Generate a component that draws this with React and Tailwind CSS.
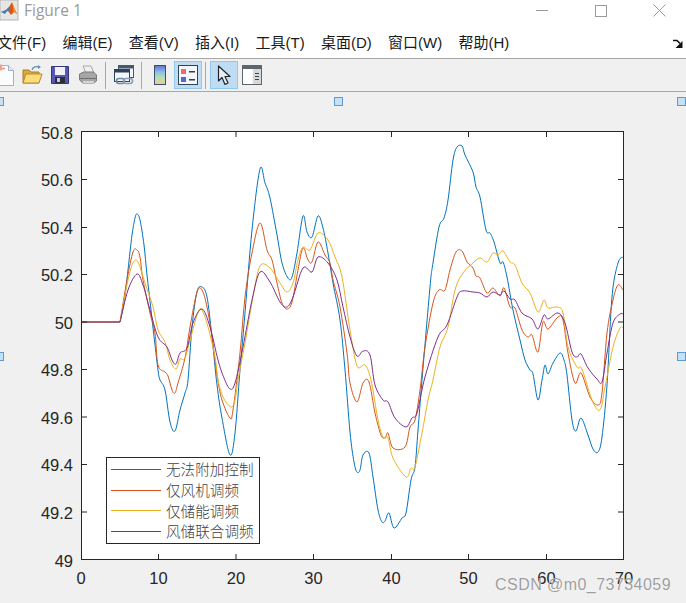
import { useId } from 'react';

const menus = ['文件(F)', '编辑(E)', '查看(V)', '插入(I)', '工具(T)', '桌面(D)', '窗口(W)', '帮助(H)'];

const blue = [[81,322],[120,322],[124,303],[128,270],[132,235],[135,218],[137,214],[140,220],[144,245],[147,275],[151,310],[155,345],[158,370],[160,380],[165,390],[170,422],[175,431],[180,410],[185,393],[188,380],[192,327],[197,292],[202,287],[207,297],[212,337],[217,385],[222,418],[230,455],[235,433],[240,370],[245,313],[252,230],[260,169],[265,183],[270,198],[277,235],[282,263],[288,278],[292,277],[297,253],[303,216],[307,232],[312,237],[318,216],[323,228],[328,253],[333,283],[340,320],[345,370],[350,432],[354,462],[357,472],[360,470],[363,455],[369,453],[373,477],[378,510],[382,522],[385,521],[389,513],[394,528],[402,518],[406,513],[411,480],[415,467],[418,430],[422,380],[430,287],[433,263],[439,227],[444,218],[448,200],[453,160],[457,147],[462,146],[465,155],[473,172],[476,187],[480,197],[486,230],[490,233],[494,242],[500,263],[503,262],[507,277],[513,310],[520,340],[525,360],[530,370],[533,374],[538,400],[542,380],[545,365],[548,374],[553,363],[560,353],[564,360],[567,375],[572,420],[576,431],[581,418],[588,435],[593,449],[598,452],[602,437],[607,385],[612,297],[618,263],[623,257]];

const red = [[81,322],[120,322],[127,280],[133,252],[137,250],[140,257],[143,280],[150,313],[155,333],[158,365],[165,372],[168,376],[172,390],[175,393],[178,383],[185,358],[190,327],[197,292],[202,290],[207,307],[212,337],[217,375],[222,400],[230,418],[233,410],[240,353],[245,297],[252,253],[260,223],[267,250],[272,260],[277,283],[282,303],[287,309],[292,302],[298,270],[303,248],[308,260],[312,262],[318,242],[325,255],[330,263],[333,280],[340,307],[347,353],[350,383],[357,402],[363,383],[369,382],[375,413],[381,435],[385,438],[388,433],[393,448],[405,447],[410,427],[415,420],[420,390],[425,347],[433,303],[439,290],[445,290],[450,270],[456,252],[462,251],[467,262],[473,268],[476,276],[480,278],[487,293],[493,288],[500,296],[504,288],[510,307],[515,308],[522,330],[528,337],[532,335],[538,352],[543,322],[548,329],[558,317],[563,320],[568,353],[575,383],[581,373],[590,397],[598,405],[602,393],[607,333],[613,300],[618,285],[623,290]];

const orange = [[81,322],[120,322],[128,280],[133,263],[138,262],[145,283],[153,307],[158,330],[165,342],[170,360],[176,369],[180,359],[185,358],[192,333],[198,312],[202,310],[208,327],[215,357],[218,380],[223,397],[231,407],[235,400],[238,380],[245,343],[253,297],[260,266],[270,268],[280,283],[287,292],[293,283],[298,260],[303,247],[310,250],[318,233],[328,240],[335,257],[342,277],[350,330],[357,366],[365,365],[371,380],[378,420],[383,437],[388,438],[393,458],[406,477],[411,468],[415,467],[422,433],[428,400],[433,380],[440,347],[448,327],[455,290],[463,273],[473,263],[480,258],[487,262],[493,253],[498,255],[503,251],[510,262],[515,265],[522,283],[530,293],[538,312],[544,300],[548,308],[557,307],[563,313],[568,347],[577,367],[582,369],[592,400],[600,410],[605,387],[613,347],[620,328],[623,328]];

const purple = [[81,322],[120,322],[128,290],[137,274],[143,285],[150,310],[158,337],[167,347],[172,360],[176,364],[180,353],[187,348],[193,323],[202,309],[210,327],[218,360],[224,378],[230,389],[235,383],[243,347],[252,300],[260,272],[270,282],[280,302],[287,307],[293,297],[303,268],[312,272],[318,257],[328,263],[337,280],[343,307],[350,337],[357,356],[363,351],[370,355],[375,385],[383,400],[388,402],[395,418],[406,427],[412,418],[417,413],[425,377],[438,337],[447,325],[457,297],[462,291],[473,292],[480,293],[487,297],[493,292],[500,295],[504,291],[510,299],[515,300],[522,313],[532,319],[538,329],[544,315],[548,319],[558,313],[565,323],[572,352],[577,357],[581,354],[588,368],[597,379],[602,382],[607,353],[613,323],[620,314],[623,314]];

const series = [
  { pts: blue, color: '#0072BD', label: '无法附加控制' },
  { pts: red, color: '#D95319', label: '仅风机调频' },
  { pts: orange, color: '#EDB120', label: '仅储能调频' },
  { pts: purple, color: '#7E2F8E', label: '风储联合调频' },
];

const xTicks = [
  [81, '0'], [158.5, '10'], [236, '20'], [313.5, '30'], [391.5, '40'], [468.5, '50'], [546.5, '60'], [624, '70'],
];
const yTicks = [
  [132, '50.8'], [179.5, '50.6'], [227.5, '50.4'], [274.5, '50.2'], [322, '50'],
  [369.5, '49.8'], [417, '49.6'], [464.5, '49.4'], [512, '49.2'], [560, '49'],
];

// flat lead-in as a straight line, catmull-rom after it so the traces don't look faceted
function toPath(pts) {
  let d = `M${pts[0][0]} ${pts[0][1]}L${pts[1][0]} ${pts[1][1]}`;
  for (let i = 1; i < pts.length - 1; i++) {
    const p0 = i === 1 ? pts[i] : pts[i - 1];
    const p1 = pts[i];
    const p2 = pts[i + 1];
    const p3 = pts[i + 2] || p2;
    const c1x = p1[0] + (p2[0] - p0[0]) / 6;
    const c1y = p1[1] + (p2[1] - p0[1]) / 6;
    const c2x = p2[0] - (p3[0] - p1[0]) / 6;
    const c2y = p2[1] - (p3[1] - p1[1]) / 6;
    d += `C${c1x.toFixed(1)} ${c1y.toFixed(1)} ${c2x.toFixed(1)} ${c2y.toFixed(1)} ${p2[0]} ${p2[1]}`;
  }
  return d;
}

function MatlabLogo() {
  return (
    <svg width="19" height="21" viewBox="0 0 19 21">
      <rect x="0" y="0" width="18" height="20" fill="#e6e6e6" stroke="#b5b5b5" />
      <path d="M1 12l5-2 3-3 3-5 2 5 3 7-3-2-3 3-3-4-3 1z" fill="#d9581c" />
      <path d="M1 12l5-2 3-3 1 3-3 1-2 3z" fill="#3f7fb5" />
      <path d="M12 2l2 5 3 7-3-2z" fill="#f0a030" />
    </svg>
  );
}

function NewIcon() {
  return (
    <svg width="24" height="24" viewBox="0 0 24 24">
      <path d="M3.5 2.5h13l5 5v15h-18z" fill="#fbfcfe" stroke="#9fb4c8" />
      <path d="M16.5 2.5v5h5" fill="#dfe8f0" stroke="#9fb4c8" />
      <path d="M8 1.5h2v3h3v2h-3v1h-2v-1h-3v-2h3z" fill="#f2a090" />
    </svg>
  );
}

function OpenIcon() {
  return (
    <svg width="22" height="22" viewBox="0 0 22 22">
      <path d="M2 6h6l2 2h8v11H2z" fill="#d9a93a" stroke="#a87f22" />
      <path d="M2 19l3-9h16l-3 9z" fill="#fbdc7a" stroke="#b78c2a" />
      <path d="M11 6c1-3 4-4 7-3" fill="none" stroke="#6c8fb0" strokeWidth="1.4" />
      <path d="M17 1l3 2-3 2z" fill="#6c8fb0" />
    </svg>
  );
}

function SaveIcon() {
  return (
    <svg width="20" height="20" viewBox="0 0 20 20">
      <path d="M1.5 1.5h17v17h-17z" fill="#5558b4" stroke="#34377e" />
      <rect x="5" y="2" width="10" height="8" fill="#f2f2f6" />
      <rect x="5" y="12" width="10" height="6" fill="#2e2e38" />
      <rect x="7" y="13" width="3" height="4" fill="#c9c9d6" />
    </svg>
  );
}

function PrintIcon() {
  return (
    <svg width="20" height="20" viewBox="0 0 20 20">
      <path d="M5 1l8-0 3 7H8z" fill="#eef1f4" stroke="#a5a8ab" />
      <path d="M1.5 9l4-2h10l3 3v6l-3 2H5l-3.5-3z" fill="#a6a6a6" stroke="#7a7a7a" />
      <path d="M2 13h16v1H2z" fill="#6f6f6f" />
      <path d="M5 16h11v2H5z" fill="#d6d6d6" />
    </svg>
  );
}

function LinkIcon() {
  return (
    <svg width="22" height="22" viewBox="0 0 22 22">
      <rect x="5.5" y="1.5" width="15" height="12" fill="#f3f5f8" stroke="#42586f" />
      <rect x="5.5" y="1.5" width="15" height="3" fill="#42586f" />
      <rect x="1.5" y="5.5" width="15" height="12" fill="#f3f5f8" stroke="#2e4358" />
      <rect x="1.5" y="5.5" width="15" height="3" fill="#2e4358" />
      <rect x="3.5" y="14.5" width="8" height="5" rx="2.5" fill="none" stroke="#6e8aa6" strokeWidth="1.6" />
      <rect x="10.5" y="14.5" width="9" height="5" rx="2.5" fill="none" stroke="#86a0b8" strokeWidth="1.6" />
    </svg>
  );
}

function ColorbarIcon() {
  const id = useId();
  return (
    <svg width="14" height="20" viewBox="0 0 14 20">
      <defs>
        <linearGradient id={id} x1="0" y1="0" x2="0" y2="1">
          <stop offset="0" stopColor="#5b6fd0" />
          <stop offset="0.35" stopColor="#8fc0e8" />
          <stop offset="0.65" stopColor="#b8e0b0" />
          <stop offset="1" stopColor="#f5c890" />
        </linearGradient>
      </defs>
      <rect x="1.5" y="0.5" width="11" height="19" fill={`url(#${id})`} stroke="#3a4f68" />
    </svg>
  );
}

function LegendIcon() {
  return (
    <svg width="20" height="20" viewBox="0 0 20 20">
      <rect x="0.5" y="0.5" width="19" height="19" fill="#f4f6f9" stroke="#2e4358" />
      <rect x="3" y="4" width="5" height="5" fill="#ea6a72" />
      <rect x="3" y="12" width="5" height="5" fill="#5a62dc" />
      <rect x="11" y="6" width="6" height="1.5" fill="#33404e" />
      <rect x="11" y="14" width="6" height="1.5" fill="#33404e" />
    </svg>
  );
}

function PointerIcon() {
  return (
    <svg width="14" height="21" viewBox="0 0 14 21">
      <path d="M1.5 1v15l3.5-3.5 3 7 3-1.5-3-6.5h5z" fill="#e9eef2" stroke="#20262c" strokeWidth="1.2" strokeLinejoin="round" />
    </svg>
  );
}

function PanelIcon() {
  return (
    <svg width="20" height="20" viewBox="0 0 20 20">
      <rect x="0.5" y="0.5" width="19" height="19" fill="#f8f8f8" stroke="#5c6670" />
      <rect x="0.5" y="0.5" width="19" height="3.5" fill="#5c6670" />
      <rect x="1" y="4" width="9" height="15" fill="#ffffff" />
      <rect x="11" y="4" width="8" height="15" fill="#d8d8d8" />
      <path d="M13 8h4v1h-4zM13 11h4v1h-4zM13 14h4v1h-4z" fill="#3c444c" />
    </svg>
  );
}

function ToolButton({ active, children }) {
  return (
    <div className={`flex h-7 w-7 shrink-0 items-center justify-center border ${active ? 'border-[#90c8f0] bg-[#bfdcf3]' : 'border-transparent'}`}>
      {children}
    </div>
  );
}

function Sep() {
  return <div className="ml-[3px] mr-[4px] h-[27px] w-px shrink-0 bg-[#a8a8a8]" />;
}

function Handle({ className }) {
  return <div className={`absolute h-[9px] w-[9px] border border-[#5b9bd5] bg-[#c8e0f4] ${className}`} />;
}

function Chart() {
  return (
    <svg width="686" height="511" viewBox="0 92 686 511" className="block">
      <rect x="81.5" y="132" width="542" height="428" fill="#ffffff" />
      {series.map((s) => (
        <path key={s.color} d={toPath(s.pts)} fill="none" stroke={s.color} strokeWidth="1" strokeLinejoin="round" />
      ))}
      <rect x="81.5" y="131.5" width="542" height="428" fill="none" stroke="#262626" />
      <g stroke="#262626">
        {xTicks.slice(1, -1).map(([x]) => (
          <g key={x}>
            <path d={`M${x} 132v5`} />
            <path d={`M${x} 559v-5`} />
          </g>
        ))}
        {yTicks.slice(1, -1).map(([y]) => (
          <g key={y}>
            <path d={`M82 ${y}h5`} />
            <path d={`M623 ${y}h-5`} />
          </g>
        ))}
      </g>
      <g fill="#262626" fontFamily="'Liberation Sans', Arial, sans-serif" fontSize="16.5">
        {xTicks.map(([x, t]) => (
          <text key={t} x={x} y="584" textAnchor="middle">{t}</text>
        ))}
        {yTicks.map(([y, t]) => (
          <text key={t} x="73" y={y + 6.5} textAnchor="end">{t}</text>
        ))}
      </g>
    </svg>
  );
}

export default function App() {
  return (
    <div className="flex h-[603px] w-[686px] flex-col overflow-hidden bg-[#f0f0f0]">
      <div className="flex h-[30px] shrink-0 items-start bg-white">
        <MatlabLogo />
        <span className="ml-[5px] mt-[-1px] font-['Open_Sans',sans-serif] text-[15.5px] leading-[22px] text-[#999999]">Figure 1</span>
        <div className="ml-auto mr-[-3px] flex">
          <div className="flex h-[21px] w-[58px] items-center justify-center">
            <div className="h-px w-3 bg-[#9a9a9a]" />
          </div>
          <div className="flex h-[21px] w-[59px] items-center justify-center">
            <div className="h-3 w-3 border border-[#9a9a9a]" />
          </div>
          <div className="flex h-[21px] w-[59px] items-center justify-center">
            <svg width="13" height="13" viewBox="0 0 13 13">
              <path d="M0.5 0.5l12 12M12.5 0.5l-12 12" stroke="#9a9a9a" />
            </svg>
          </div>
        </div>
      </div>

      <div className="flex h-[29px] shrink-0 items-center justify-between border-b border-[#a8a8a8] bg-white pb-[2px] pr-[3px]">
        <div className="-ml-[3px] flex gap-[16.3px] font-['Liberation_Sans','Noto_Sans_CJK_SC',sans-serif] text-[15px] leading-[20px] text-[#1a1a1a]">
          {menus.map((m) => (
            <span key={m}>{m}</span>
          ))}
        </div>
        <svg width="10" height="9" viewBox="0 0 10 9">
          <path d="M0 1.5h4l3 3" fill="none" stroke="#111111" strokeWidth="1.6" />
          <path d="M9.5 2v7h-7z" fill="#111111" />
        </svg>
      </div>

      <div className="ml-[-10px] flex h-[32px] shrink-0 items-center bg-[#f0f0f0]">
        <ToolButton><NewIcon /></ToolButton>
        <ToolButton><OpenIcon /></ToolButton>
        <ToolButton><SaveIcon /></ToolButton>
        <ToolButton><PrintIcon /></ToolButton>
        <Sep />
        <ToolButton><LinkIcon /></ToolButton>
        <Sep />
        <ToolButton><ColorbarIcon /></ToolButton>
        <ToolButton active><LegendIcon /></ToolButton>
        <Sep />
        <ToolButton active><PointerIcon /></ToolButton>
        <ToolButton><PanelIcon /></ToolButton>
      </div>

      <div className="relative flex-1 border-t border-[#a8a8a8]">
        <Chart />

        <Handle className="left-[-5px] top-[5px]" />
        <Handle className="left-[334px] top-[5px]" />
        <Handle className="left-[677px] top-[5px]" />
        <Handle className="left-[-5px] top-[260px]" />
        <Handle className="left-[677px] top-[260px]" />

        <div className="absolute left-[106px] top-[365px] flex h-[87px] w-[154px] flex-col justify-center border border-[#262626] bg-white">
          {series.map((s) => (
            <div key={s.label} className="flex h-[20.6px] items-center">
              <div className="ml-[4px] h-px w-[50px]" style={{ backgroundColor: s.color }} />
              <span className="ml-[5px] font-['Noto_Sans_CJK_SC',sans-serif] text-[14.6px] font-light leading-none text-[#404040]">{s.label}</span>
            </div>
          ))}
        </div>

        <div className="absolute left-[495px] top-[483px] whitespace-nowrap font-['Liberation_Sans',sans-serif] text-[16px] leading-[20px] tracking-[0.45px] text-[#8c8c8c]/85 [text-shadow:0_0_1px_#ffffff]">
          CSDN @m0_73734059
        </div>
      </div>
    </div>
  );
}
